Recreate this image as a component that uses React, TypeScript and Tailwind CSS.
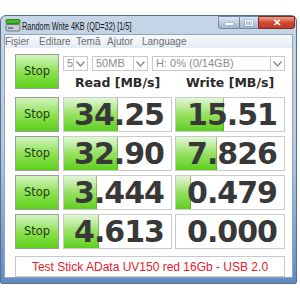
const READ = [
  { value: "34.25", bar: 54 },
  { value: "32.90", bar: 54 },
  { value: "3.444", bar: 33 },
  { value: "4.613", bar: 35 },
];

const WRITE = [
  { value: "15.51", bar: 48 },
  { value: "7.826", bar: 41 },
  { value: "0.479", bar: 15 },
  { value: "0.000", bar: 0 },
];

const MENU = [
  { label: "Fişier", w: "w-[34px]" },
  { label: "Editare", w: "w-[37px]" },
  { label: "Temă", w: "w-[31px]" },
  { label: "Ajutor", w: "w-[35px]" },
  { label: "Language", w: "w-[46px]" },
];

function Chevron() {
  return (
    <svg width="9" height="6" viewBox="0 0 9 6" fill="none">
      <path d="M0.5 0.5 L4.5 5 L8.5 0.5" stroke="#7b8794" strokeWidth="1.2" />
    </svg>
  );
}

function Combo({ label, width }: { label: string; width: string }) {
  return (
    <div className={`flex h-[15px] ${width} border border-[#c9c9c9] bg-white`}>
      <span className="flex-1 truncate pl-[3px] text-[11px] leading-[13px] text-[#8c8c8c]">
        {label}
      </span>
      <span className="flex w-[14px] items-center justify-center border-l border-[#c9c9c9]">
        <Chevron />
      </span>
    </div>
  );
}

function StopButton() {
  return (
    <button className="flex h-[35px] w-[44px] shrink-0 items-center justify-center border border-[#9d9d9d] bg-gradient-to-b from-[#d2f3bd] via-[#8de24f] to-[#5cd014] font-['DejaVu_Sans',sans-serif] text-[11.5px] text-[#283a1e]">
      Stop
    </button>
  );
}

function Cell({ value, bar, width }: { value: string; bar: number; width: string }) {
  return (
    <div className={`relative h-[35px] ${width} border border-[#cacaca] bg-white`}>
      {bar > 0 && (
        <div
          className="absolute inset-y-0 left-0 border-r border-[#5a8f3a]/50 bg-gradient-to-b from-[#e4f6d6] via-[#98e160] to-[#5ccf16]"
          style={{ width: bar }}
        />
      )}
      <div className="relative flex h-full items-center justify-end pr-[7px] font-['DejaVu_Sans',sans-serif] text-[30px] font-bold tracking-[-1px] text-[#383838]">
        {value}
      </div>
    </div>
  );
}

export default function App() {
  return (
    <div className="h-[300px] w-[300px] overflow-hidden bg-white font-['Liberation_Sans',Arial,sans-serif]">
      <div className="mt-[15px] flex h-[269px] w-[297px] flex-col rounded-t-[6px] rounded-b-[2px] border border-[#5a6e8c] bg-gradient-to-b from-[#c6d6e8] via-[#b4c9e1] to-[#5f8bc4] pb-[5px]">
        {/* title bar */}
        <div className="flex h-[20px] items-start">
          <svg className="ml-[4px] mt-[3px]" width="16" height="13" viewBox="0 0 16 13">
            <rect x="1" y="0.5" width="14" height="4" rx="1" fill="#3dbb2a" stroke="#2a8a1c" />
            <rect x="1" y="5.5" width="14" height="6.5" rx="1" fill="#c8ccd2" stroke="#6d747e" />
            <rect x="3" y="8" width="5" height="2" fill="#7d848e" />
          </svg>
          <span className="ml-[1px] mt-[4px] origin-left scale-x-[0.7] whitespace-nowrap text-[10.5px] leading-[13px] text-[#111]">
            Random Write 4KB (QD=32) [1/5]
          </span>
          <div className="ml-auto mr-[1px] flex h-[13px]">
            <div className="flex w-[22px] items-end justify-center rounded-bl-[3px] border border-[#6f86a6] bg-gradient-to-b from-[#dbe6f2] to-[#9fb6d3] pb-[3px]">
              <span className="h-[2px] w-[8px] bg-white shadow-[0_0_1px_#333]" />
            </div>
            <div className="flex w-[18px] items-center justify-center border-y border-[#6f86a6] bg-gradient-to-b from-[#dbe6f2] to-[#9fb6d3]">
              <span className="h-[6px] w-[8px] border border-white shadow-[0_0_1px_#333]" />
            </div>
            <div className="flex w-[37px] items-center justify-center rounded-br-[3px] border border-[#7a2a20] bg-gradient-to-b from-[#e8a18f] via-[#cf4a32] to-[#c0392a] text-[10px] font-bold leading-none text-white">
              ✕
            </div>
          </div>
        </div>

        {/* client area */}
        <div className="mx-[3px] flex flex-1 flex-col border border-[#8fa5c2] bg-white">
          <div className="flex h-[13px] items-center bg-gradient-to-b from-[#f7f9fc] to-[#e6ecf5] text-[10px] text-[#6e6e6e]">
            {MENU.map((m) => (
              <span key={m.label} className={m.w}>
                {m.label}
              </span>
            ))}
          </div>

          <div className="flex flex-col gap-[4px] pl-[10px] pt-[6px]">
            <div className="flex gap-[4px]">
              <StopButton />
              <div className="flex w-[222px] flex-col pt-[2px]">
                <div className="flex gap-[4px]">
                  <Combo label="5" width="w-[25px]" />
                  <Combo label="50MB" width="w-[56px]" />
                  <Combo label="H: 0% (0/14GB)" width="w-[133px]" />
                </div>
                <div className="mt-[3px] flex gap-[3px] font-['DejaVu_Sans',sans-serif] text-[12.5px] font-bold text-[#2a2a2a]">
                  <span className="w-[109px] text-center">Read [MB/s]</span>
                  <span className="w-[110px] text-center">Write [MB/s]</span>
                </div>
              </div>
            </div>

            {READ.map((r, i) => (
              <div key={i} className="flex gap-[4px]">
                <StopButton />
                <div className="flex gap-[3px]">
                  <Cell value={r.value} bar={r.bar} width="w-[109px]" />
                  <Cell value={WRITE[i].value} bar={WRITE[i].bar} width="w-[110px]" />
                </div>
              </div>
            ))}

            <div className="mt-[3px] flex h-[21px] w-[270px] items-center justify-center border border-[#c8c8c8] text-[12px] text-[#e0222c]">
              Test Stick AData UV150 red 16Gb - USB 2.0
            </div>
          </div>
        </div>
      </div>
    </div>
  );
}
